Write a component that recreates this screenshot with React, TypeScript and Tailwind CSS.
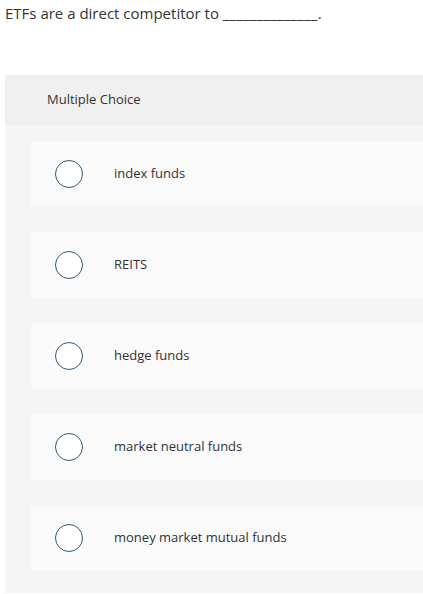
import React from "react";

const options = ["index funds", "REITS", "hedge funds", "market neutral funds", "money market mutual funds"];

export default function App() {
  return (
    <div className="w-[423px] h-[594px] bg-white overflow-hidden" style={{ fontFamily: "'Open Sans', 'Noto Sans', sans-serif" }}>
      <div className="pt-[3px] pl-[5px] h-[75px] text-[15px] leading-[20px] text-[#333]">
        ETFs are a direct competitor to <span className="tracking-[0.2px]">______________</span>.
      </div>
      <div className="ml-[5px] h-[518px] bg-[#f5f5f5]">
        <div className="h-[50px] bg-[#f0f0f0] flex items-center pl-[42px] text-[13px] text-[#333]">
          Multiple Choice
        </div>
        <div className="flex flex-col gap-[25px] pt-[16px] pl-[26px]">
          {options.map((o) => (
            <div key={o} className="h-[66px] bg-[#fafafa] flex items-center pl-[24px]">
              <div className="w-[28px] h-[28px] rounded-full border-[1.5px] border-[#2f5878] bg-white shrink-0" />
              <div className="ml-[31px] text-[13px] text-[#333]">{o}</div>
            </div>
          ))}
        </div>
      </div>
    </div>
  );
}
